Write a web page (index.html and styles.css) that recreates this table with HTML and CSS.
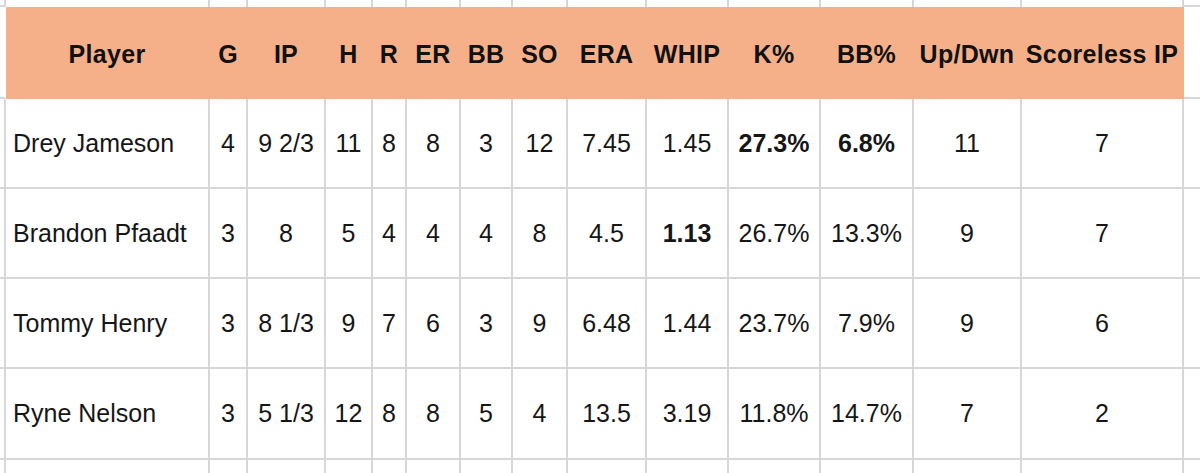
FILE: index.html
```html
<!DOCTYPE html>
<html lang="en">
<head>
<meta charset="utf-8">
<title>Pitching stats</title>
<link rel="stylesheet" href="styles.css">
</head>
<body>
<div class="sheet" role="table">
  <div class="row spacer">
    <div class="cell stub"></div>
    <div class="cell"></div><div class="cell"></div><div class="cell"></div><div class="cell"></div>
    <div class="cell"></div><div class="cell"></div><div class="cell"></div><div class="cell"></div>
    <div class="cell"></div><div class="cell"></div><div class="cell"></div><div class="cell"></div>
    <div class="cell"></div><div class="cell"></div>
    <div class="cell extra"></div>
  </div>
  <div class="row head" role="row">
    <div class="cell stub"></div>
    <div class="cell" role="columnheader">Player</div>
    <div class="cell" role="columnheader">G</div>
    <div class="cell" role="columnheader">IP</div>
    <div class="cell" role="columnheader">H</div>
    <div class="cell" role="columnheader">R</div>
    <div class="cell" role="columnheader">ER</div>
    <div class="cell" role="columnheader">BB</div>
    <div class="cell" role="columnheader">SO</div>
    <div class="cell" role="columnheader">ERA</div>
    <div class="cell" role="columnheader">WHIP</div>
    <div class="cell" role="columnheader">K%</div>
    <div class="cell" role="columnheader">BB%</div>
    <div class="cell" role="columnheader">Up/Dwn</div>
    <div class="cell" role="columnheader">Scoreless IP</div>
    <div class="cell extra"></div>
  </div>
  <div class="row data" role="row">
    <div class="cell stub"></div>
    <div class="cell name">Drey Jameson</div>
    <div class="cell">4</div><div class="cell">9 2/3</div><div class="cell">11</div><div class="cell">8</div>
    <div class="cell">8</div><div class="cell">3</div><div class="cell">12</div><div class="cell">7.45</div>
    <div class="cell">1.45</div><div class="cell bold">27.3%</div><div class="cell bold">6.8%</div>
    <div class="cell">11</div><div class="cell">7</div>
    <div class="cell extra"></div>
  </div>
  <div class="row data" role="row">
    <div class="cell stub"></div>
    <div class="cell name">Brandon Pfaadt</div>
    <div class="cell">3</div><div class="cell">8</div><div class="cell">5</div><div class="cell">4</div>
    <div class="cell">4</div><div class="cell">4</div><div class="cell">8</div><div class="cell">4.5</div>
    <div class="cell bold">1.13</div><div class="cell">26.7%</div><div class="cell">13.3%</div>
    <div class="cell">9</div><div class="cell">7</div>
    <div class="cell extra"></div>
  </div>
  <div class="row data" role="row">
    <div class="cell stub"></div>
    <div class="cell name">Tommy Henry</div>
    <div class="cell">3</div><div class="cell">8 1/3</div><div class="cell">9</div><div class="cell">7</div>
    <div class="cell">6</div><div class="cell">3</div><div class="cell">9</div><div class="cell">6.48</div>
    <div class="cell">1.44</div><div class="cell">23.7%</div><div class="cell">7.9%</div>
    <div class="cell">9</div><div class="cell">6</div>
    <div class="cell extra"></div>
  </div>
  <div class="row data last" role="row">
    <div class="cell stub"></div>
    <div class="cell name">Ryne Nelson</div>
    <div class="cell">3</div><div class="cell">5 1/3</div><div class="cell">12</div><div class="cell">8</div>
    <div class="cell">8</div><div class="cell">5</div><div class="cell">4</div><div class="cell">13.5</div>
    <div class="cell">3.19</div><div class="cell">11.8%</div><div class="cell">14.7%</div>
    <div class="cell">7</div><div class="cell">2</div>
    <div class="cell extra"></div>
  </div>
  <div class="row tail">
    <div class="cell stub"></div>
    <div class="cell"></div><div class="cell"></div><div class="cell"></div><div class="cell"></div>
    <div class="cell"></div><div class="cell"></div><div class="cell"></div><div class="cell"></div>
    <div class="cell"></div><div class="cell"></div><div class="cell"></div><div class="cell"></div>
    <div class="cell"></div><div class="cell"></div>
    <div class="cell extra"></div>
  </div>
</div>
</body>
</html>
```

FILE: styles.css
```css
html, body {
  margin: 0;
  padding: 0;
  background: #ffffff;
  overflow: hidden;
}

body {
  width: 1200px;
  height: 473px;
  font-family: "Liberation Sans", Arial, Helvetica, sans-serif;
  color: #161616;
}

.sheet {
  display: flex;
  flex-direction: column;
  width: 1224px;
}

.row {
  display: grid;
  grid-template-columns: 6px 204px 38px 78px 47px 34px 54px 52px 55px 79px 82px 92px 93px 108px 162px 40px;
}

.cell {
  box-sizing: border-box;
  border-right: 2px solid #d7d7d7;
  border-bottom: 2px solid #d7d7d7;
  display: flex;
  align-items: center;
  justify-content: center;
  white-space: nowrap;
  font-size: 25px;
}

.spacer { height: 7px; }
.spacer .cell { border-bottom: none; }
.spacer .stub, .spacer .extra { border-bottom: 2px solid #d7d7d7; }

.head { height: 92px; }
.head .cell {
  background: #f5b089;
  border-color: #f5b089;
  font-weight: bold;
  font-size: 25px;
  letter-spacing: 0.3px;
  padding-top: 4px;
  color: #111111;
}
.head .stub {
  background: #ffffff;
  border-right-color: #ffffff;
  border-bottom-color: #d7d7d7;
}
.head .extra {
  background: #ffffff;
  border-color: #d7d7d7;
  border-right: none;
}

.data { height: 90px; }
.data.last { height: 91px; }

.name {
  justify-content: flex-start;
  padding-left: 7px;
}

.bold { font-weight: bold; }

.tail { height: 20px; }

.extra { border-right: none; }
```
